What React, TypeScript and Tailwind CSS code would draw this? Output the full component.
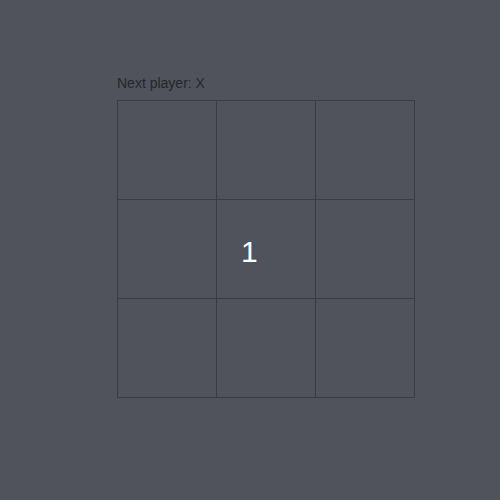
const cells = ["", "", "", "", "1", "", "", "", ""];

export default function App() {
  return (
    <div
      className="min-h-[500px] w-full bg-[#50535c] pl-[117px] pt-[74px]"
      style={{ fontFamily: '"Liberation Sans", Arial, sans-serif' }}
    >
      <div className="mb-[8px] text-[14px] leading-[18px] text-[#25272d]">
        Next player: X
      </div>
      <div className="grid w-[298px] grid-cols-3 border-l border-t border-[#3a3c43]">
        {cells.map((c, i) => (
          <div
            key={i}
            className="flex h-[99px] items-center border-b border-r border-[#3a3c43] pl-[24px] pt-[5px] text-[30px] text-white"
          >
            {c}
          </div>
        ))}
      </div>
    </div>
  );
}
